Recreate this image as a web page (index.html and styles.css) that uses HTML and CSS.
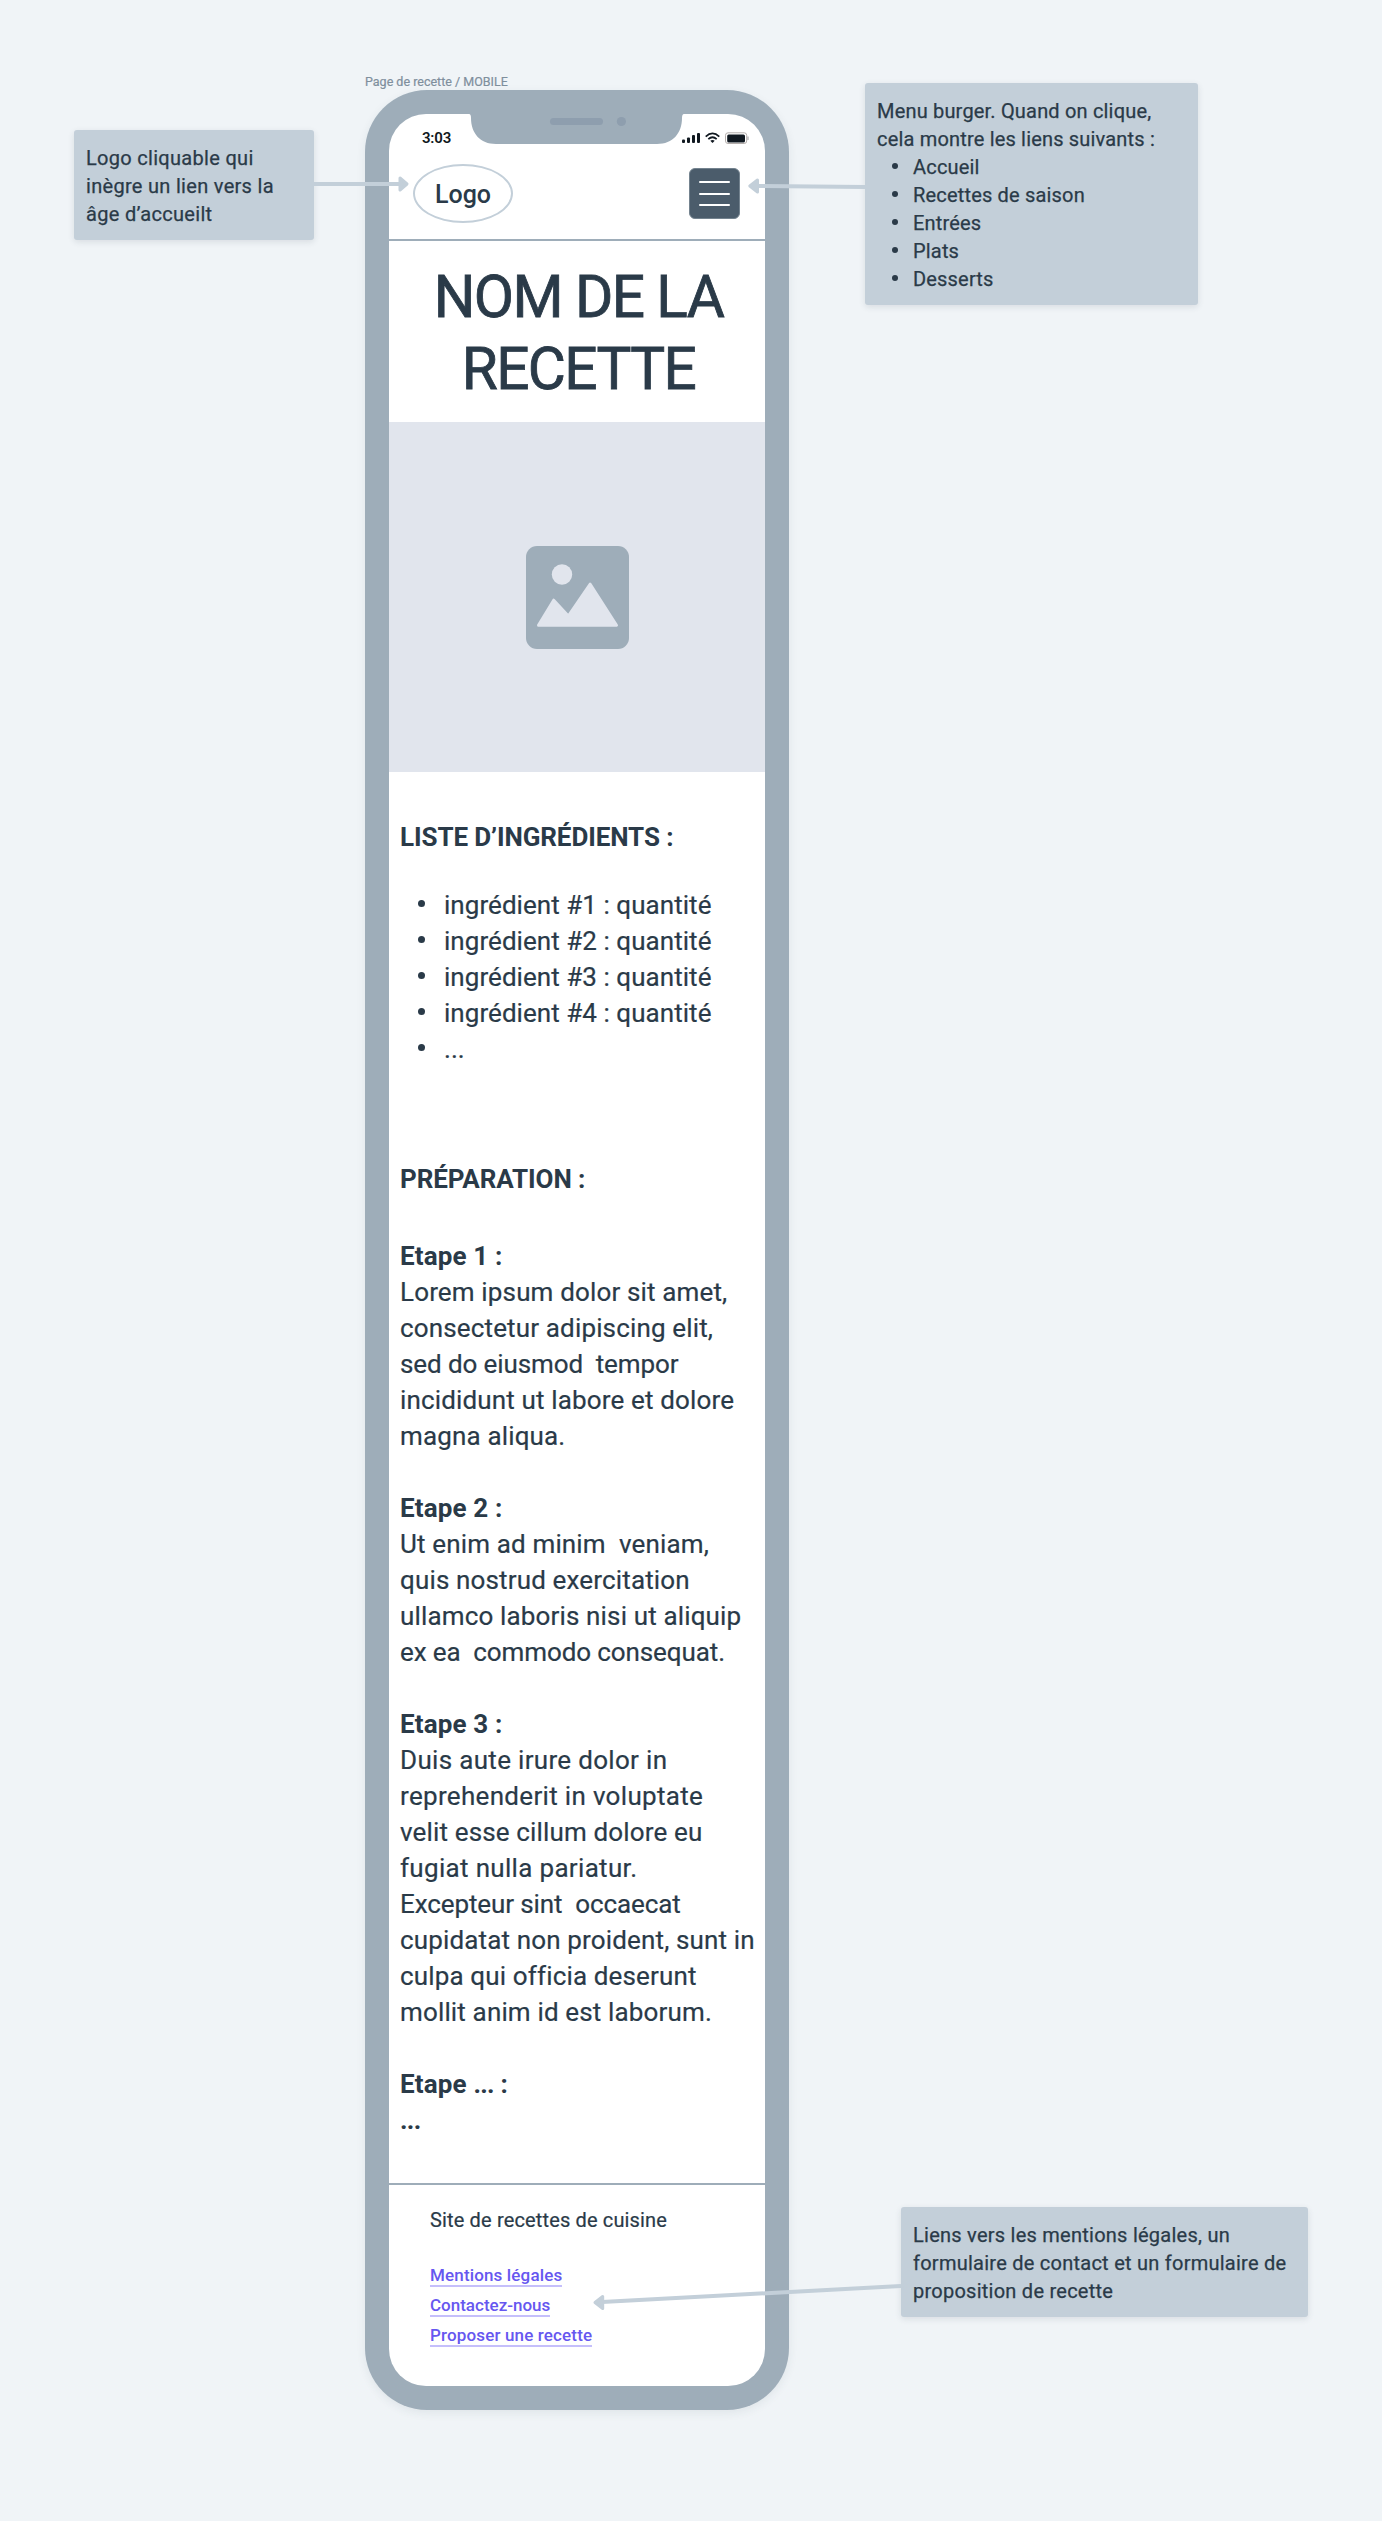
FILE: index.html
```html
<!DOCTYPE html>
<html lang="fr">
<head>
  <meta charset="utf-8">
  <title>Page de recette / MOBILE</title>
  <link rel="stylesheet" href="styles.css">
</head>
<body>
  <main class="canvas">
    <section class="frame">
      <p class="frame-label">Page de recette / MOBILE</p>
      <div class="phone">
        <svg class="notch" width="215" height="30" viewBox="0 0 215 30">
          <path fill="#9eadb9" d="M0 0 H215 Q213 0 213 4 C213 19 204 30 188 30 H27 C11 30 2 19 2 4 Q2 0 0 0Z"/>
          <rect x="81" y="4" width="53" height="7" rx="3.5" fill="#8e9eae"/>
          <circle cx="152.400" cy="7.500" r="4.600" fill="#8e9eae"/>
        </svg>
        <article class="screen">
          <div class="status">
            <span class="time">3:03</span>
            <svg class="indicators" width="67" height="12" viewBox="0 0 67 12">
              <g fill="#101820">
                <rect x="0" y="7.500" width="3" height="3.500" rx="1"/>
                <rect x="5" y="5.500" width="3" height="5.500" rx="1"/>
                <rect x="10" y="3" width="3" height="8" rx="1"/>
                <rect x="15" y="1" width="3" height="10" rx="1"/>
                <path d="M30.500 11 L28.300 8.700 Q30.500 7.100 32.700 8.700Z"/>
                <rect x="45.200" y="2.500" width="17.800" height="8" rx="1.500"/>
              </g>
              <g fill="none" stroke="#101820" stroke-width="1.700">
                <path d="M23.700 4.600 Q30.500 -1.700 37.300 4.600"/>
                <path d="M26.300 7.200 Q30.500 3.300 34.700 7.200"/>
              </g>
              <rect x="43.500" y=".8" width="21.200" height="10.700" rx="2.500" fill="none" stroke="#b3adab"/>
              <path d="M66 4.500 V8" stroke="#99999c"/>
            </svg>
          </div>
          <header class="topbar">
            <a class="logo">Logo</a>
            <button class="burger" aria-label="Menu"><i></i><i></i><i></i></button>
          </header>
          <h1 class="title">NOM DE LA<br>RECETTE</h1>
          <div class="picture">
            <svg width="103" height="103" viewBox="0 0 103 103">
              <rect width="103" height="103" rx="11" fill="#9eadb9"/>
              <circle cx="36" cy="28.500" r="10.200" fill="#e1e5ed"/>
              <path d="M12.500 79.300 L27.700 54.200 L42.300 70 L64.200 38.200 L90.500 79.300Z" fill="#e1e5ed" stroke="#e1e5ed" stroke-width="3" stroke-linejoin="round"/>
            </svg>
          </div>
          <section class="content">
            <h2 class="heading">LISTE D’INGRÉDIENTS :</h2>
            <ul class="ingredients">
              <li>ingrédient #1 : quantité</li>
              <li>ingrédient #2 : quantité</li>
              <li>ingrédient #3 : quantité</li>
              <li>ingrédient #4 : quantité</li>
              <li>...</li>
            </ul>
            <h2 class="heading heading-prep">PRÉPARATION :</h2>
            <div class="step">
              <h3>Etape 1 :</h3>
              <p><span>Lorem ipsum dolor sit amet,</span>
                <span>consectetur adipiscing elit,</span>
                <span class="snug">sed do eiusmod&nbsp; tempor</span>
                <span>incididunt ut labore et dolore</span>
                <span>magna aliqua.</span></p>
            </div>
            <div class="step">
              <h3>Etape 2 :</h3>
              <p><span>Ut enim ad minim&nbsp; veniam,</span>
                <span>quis nostrud exercitation</span>
                <span>ullamco laboris nisi ut aliquip</span>
                <span class="snug">ex ea&nbsp; commodo consequat.</span></p>
            </div>
            <div class="step">
              <h3>Etape 3 :</h3>
              <p><span class="loose">Duis aute irure dolor in</span>
                <span class="loose">reprehenderit in voluptate</span>
                <span>velit esse cillum dolore eu</span>
                <span class="loose">fugiat nulla pariatur.</span>
                <span class="snug">Excepteur sint&nbsp; occaecat</span>
                <span>cupidatat non proident, sunt in</span>
                <span>culpa qui officia deserunt</span>
                <span>mollit anim id est laborum.</span></p>
            </div>
            <div class="step">
              <h3>Etape <span class="dots">...</span> :</h3>
              <h3 class="dots">...</h3>
            </div>
          </section>
          <footer class="footer">
            <p>Site de recettes de cuisine</p>
            <nav>
              <a>Mentions légales</a>
              <a class="link-tight">Contactez-nous</a>
              <a>Proposer une recette</a>
            </nav>
          </footer>
        </article>
      </div>
    </section>

    <aside class="note note-logo">Logo cliquable qui<br>inègre un lien vers la<br>âge d’accueilt</aside>
    <aside class="note note-menu">Menu burger. Quand on clique,<br>cela montre les liens suivants :
      <ul>
        <li>Accueil</li>
        <li>Recettes de saison</li>
        <li>Entrées</li>
        <li>Plats</li>
        <li>Desserts</li>
      </ul>
    </aside>
    <aside class="note note-footer">Liens vers les mentions légales, un<br>formulaire de contact et un formulaire de<br>proposition de recette</aside>

    <svg class="arrows" width="1382" height="2521" viewBox="0 0 1382 2521">
      <g fill="none" stroke="#c3cfd9" stroke-width="4">
        <path d="M314 184 H401"/>
        <path d="M865 187 L757 186"/>
        <path d="M901 2286 L602 2302"/>
      </g>
      <g fill="#c3cfd9" stroke="#c3cfd9" stroke-width="3" stroke-linejoin="round">
        <path d="M400 178 L407 184 L400 190Z"/>
        <path d="M757.500 180 L749.800 186 L757.500 192Z"/>
        <path d="M602.700 2296.500 L595 2302.500 L602.700 2308.500Z"/>
      </g>
    </svg>
  </main>
</body>
</html>
```
FILE: styles.css
```css
* {
  box-sizing: border-box;
  margin: 0;
  padding: 0;
}

body {
  background: #f0f4f7;
  color: #2a3a48;
  font-family: Roboto, "Liberation Sans", sans-serif;
}

.canvas {
  position: relative;
  width: 1382px;
  height: 2521px;
  overflow: hidden;
}

/* Phone frame */
.frame {
  position: absolute;
  left: 365px;
  top: 73px;
  width: 424px;
}

.frame-label {
  height: 17px;
  color: #7f8f9d;
  font-size: 12.5px;
  font-weight: 400;
  line-height: 17px;
  -webkit-text-stroke: 0.2px #7f8f9d;
}

.phone {
  position: relative;
  height: 2320px;
  padding: 24px;
  border-radius: 62px;
  background: #9eadb9;
  box-shadow: 0 3px 10px rgba(42, 58, 72, 0.08);
}

.notch {
  position: absolute;
  left: 104px;
  top: 24px;
}

.screen {
  display: flex;
  flex-direction: column;
  height: 2272px;
  border-radius: 37px;
  background: #fff;
  overflow: hidden;
}

.status {
  display: flex;
  justify-content: space-between;
  align-items: center;
  height: 48px;
  padding: 0 16px 0 33px;
}

.time {
  color: #101820;
  font-size: 15px;
  font-weight: 600;
  letter-spacing: -0.2px;
}

.topbar {
  display: flex;
  justify-content: space-between;
  align-items: center;
  height: 79px;
  padding: 2px 25px 16px 24px;
  border-bottom: 2px solid #9eadb9;
}

.logo {
  display: flex;
  align-items: center;
  justify-content: center;
  width: 100px;
  height: 59px;
  padding-top: 1px;
  border: 2px solid #c3cfd9;
  border-radius: 50%;
  font-size: 25px;
  font-weight: 500;
}

.burger {
  display: flex;
  flex-direction: column;
  align-items: center;
  justify-content: center;
  gap: 9.5px;
  width: 51px;
  height: 51px;
  border: 1px solid #74838f;
  border-radius: 6px;
  background: #4b5c6b;
}

.burger i {
  width: 31px;
  height: 2px;
  border-radius: 1px;
  background: #fff;
}

.title {
  height: 181px;
  padding: 20px 0 0 3px;
  font-size: 58.5px;
  font-weight: 400;
  line-height: 72px;
  letter-spacing: -1.6px;
  text-align: center;
  -webkit-text-stroke: 0.8px #2a3a48;
}

.picture {
  display: flex;
  align-items: center;
  justify-content: center;
  height: 350px;
  background: #e1e5ed;
}

.content {
  height: 1411px;
  padding: 47px 0 0 11px;
  font-size: 26px;
  line-height: 36px;
  letter-spacing: 0.15px;
  white-space: nowrap;
}

.heading {
  font-size: 26px;
  font-weight: 700;
  letter-spacing: -0.1px;
}

.ingredients {
  margin-top: 32px;
  padding-left: 44px;
  list-style: none;
  letter-spacing: 0.05px;
}

li {
  display: flex;
  align-items: center;
}

li::before {
  content: "";
  flex: none;
  border-radius: 50%;
  background: #2a3a48;
}

.ingredients li::before {
  width: 7px;
  height: 7px;
  margin: 0 19px 3px -26px;
}

.heading-prep {
  margin: 94px 0 41px;
}

.step {
  margin-bottom: 36px;
}

.step h3 {
  font-size: 26px;
  font-weight: 700;
}

.ingredients,
.step p {
  -webkit-text-stroke: 0.2px #2a3a48;
}

.step p span {
  display: block;
}

.step .snug {
  letter-spacing: -0.1px;
}

.step .loose {
  letter-spacing: 0.32px;
}

.dots {
  letter-spacing: -0.7px;
}

.footer {
  border-top: 2px solid #9eadb9;
  padding: 21px 0 0 41px;
}

.footer p {
  font-size: 20px;
  line-height: 28px;
  letter-spacing: 0.15px;
  -webkit-text-stroke: 0.2px #2a3a48;
}

.footer nav {
  display: flex;
  flex-direction: column;
  align-items: flex-start;
  gap: 9px;
  margin-top: 32px;
}

.footer a {
  border-bottom: 2px solid #c5bffb;
  color: #6657f0;
  font-size: 17px;
  font-weight: 500;
  line-height: 19px;
  letter-spacing: 0.15px;
}

.footer .link-tight {
  letter-spacing: 0;
}

/* Annotations */
.note {
  position: absolute;
  padding: 14px 12px 12px;
  border-radius: 3px;
  background: #c3cfd9;
  box-shadow: 0 2px 6px rgba(42, 58, 72, 0.12);
  font-size: 20px;
  font-weight: 400;
  line-height: 28px;
  letter-spacing: 0.3px;
  white-space: nowrap;
  -webkit-text-stroke: 0.25px #2a3a48;
}

.note-logo {
  left: 74px;
  top: 130px;
  width: 240px;
}

.note-menu {
  left: 865px;
  top: 83px;
  width: 333px;
  letter-spacing: 0.18px;
}

.note-menu ul {
  padding-left: 27px;
  list-style: none;
}

.note-menu li::before {
  width: 6px;
  height: 6px;
  margin: 0 15px 2px -12px;
}

.note-footer {
  left: 901px;
  top: 2207px;
  width: 407px;
  letter-spacing: 0.25px;
}

.arrows {
  position: absolute;
  left: 0;
  top: 0;
  pointer-events: none;
}
```
